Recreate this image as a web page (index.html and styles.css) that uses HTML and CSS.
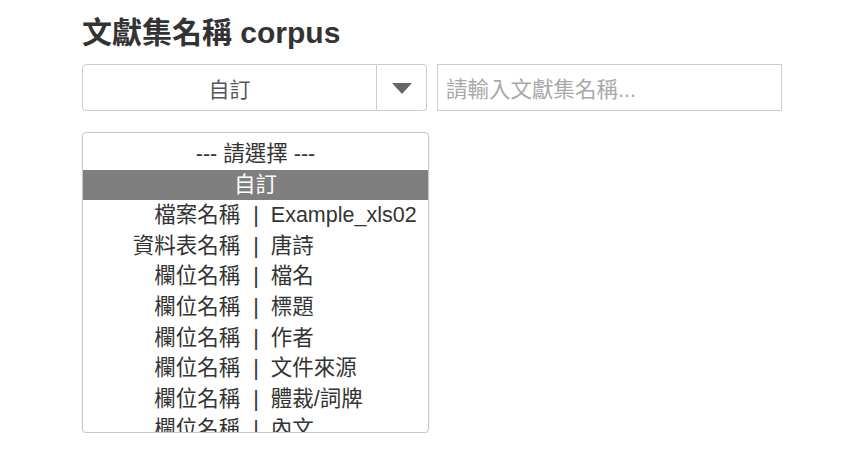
FILE: index.html
```html
<!DOCTYPE html>
<html lang="zh-Hant">
<head>
<meta charset="utf-8">
<link rel="stylesheet" href="styles.css">
</head>
<body>
<div class="page">
  <h2 class="title">文獻集名稱 corpus</h2>
  <div class="row">
    <div class="select">
      <div class="select-value">自訂</div>
      <div class="select-btn">
        <svg width="20" height="12" viewBox="0 0 20 12"><path d="M0 1 L20 1 L10 12 Z" fill="#666"/></svg>
      </div>
    </div>
    <div class="input">請輸入文獻集名稱...</div>
  </div>
  <div class="list">
    <div class="item center">--- 請選擇 ---</div>
    <div class="item center active">自訂</div>
    <div class="item"><span class="k">檔案名稱</span><span class="p">|</span><span class="v">Example_xls02</span></div>
    <div class="item"><span class="k">資料表名稱</span><span class="p">|</span><span class="v">唐詩</span></div>
    <div class="item"><span class="k">欄位名稱</span><span class="p">|</span><span class="v">檔名</span></div>
    <div class="item"><span class="k">欄位名稱</span><span class="p">|</span><span class="v">標題</span></div>
    <div class="item"><span class="k">欄位名稱</span><span class="p">|</span><span class="v">作者</span></div>
    <div class="item"><span class="k">欄位名稱</span><span class="p">|</span><span class="v">文件來源</span></div>
    <div class="item"><span class="k">欄位名稱</span><span class="p">|</span><span class="v">體裁/詞牌</span></div>
    <div class="item"><span class="k">欄位名稱</span><span class="p">|</span><span class="v">內文</span></div>
  </div>
</div>
</body>
</html>
```
FILE: styles.css
```css
* { box-sizing: border-box; }
html, body { margin: 0; padding: 0; background: #fff; }
body {
  font-family: "Liberation Sans", Arial, "Noto Sans CJK TC", sans-serif;
  color: #333;
}
.page { padding: 16px 0 0 82px; }
.title {
  margin: 0;
  font-size: 30px;
  line-height: 34px;
  font-weight: bold;
  color: #333;
}
.row {
  display: flex;
  margin-top: 14px;
  height: 47px;
}
.select {
  display: flex;
  width: 345px;
  height: 47px;
}
.select-value {
  width: 295px;
  border: 1px solid #ccc;
  border-radius: 4px 0 0 4px;
  display: flex;
  align-items: center;
  justify-content: center;
  font-size: 21px;
  color: #555;
}
.select-btn {
  width: 50px;
  border: 1px solid #ccc;
  border-left: none;
  border-radius: 0 4px 4px 0;
  display: flex;
  align-items: center;
  justify-content: center;
}
.select-btn svg { display: block; margin-top: 1px; }
.input {
  margin-left: 10px;
  width: 345px;
  height: 47px;
  border: 1px solid #ccc;
  display: flex;
  align-items: center;
  padding-left: 8px;
  font-size: 21.5px;
  color: #a9a9a9;
}
.list {
  margin-top: 21px;
  width: 347px;
  height: 301px;
  border: 1px solid #c8c8c8;
  border-radius: 4px;
  box-shadow: 0 1px 2px rgba(0,0,0,0.12);
  overflow: hidden;
  padding-top: 6px;
}
.item {
  display: grid;
  grid-template-columns: 1fr auto 1fr;
  height: 30.6px;
  line-height: 30.6px;
  font-size: 21.5px;
  color: #333;
  white-space: nowrap;
}
.item.center {
  display: block;
  text-align: center;
}
.item.active {
  background: #7f7f7f;
  color: #fff;
  margin: 0 -1px;
}
.k { text-align: right; }
.p { padding: 0 12px 0 13px; }
.v { text-align: left; }
```
